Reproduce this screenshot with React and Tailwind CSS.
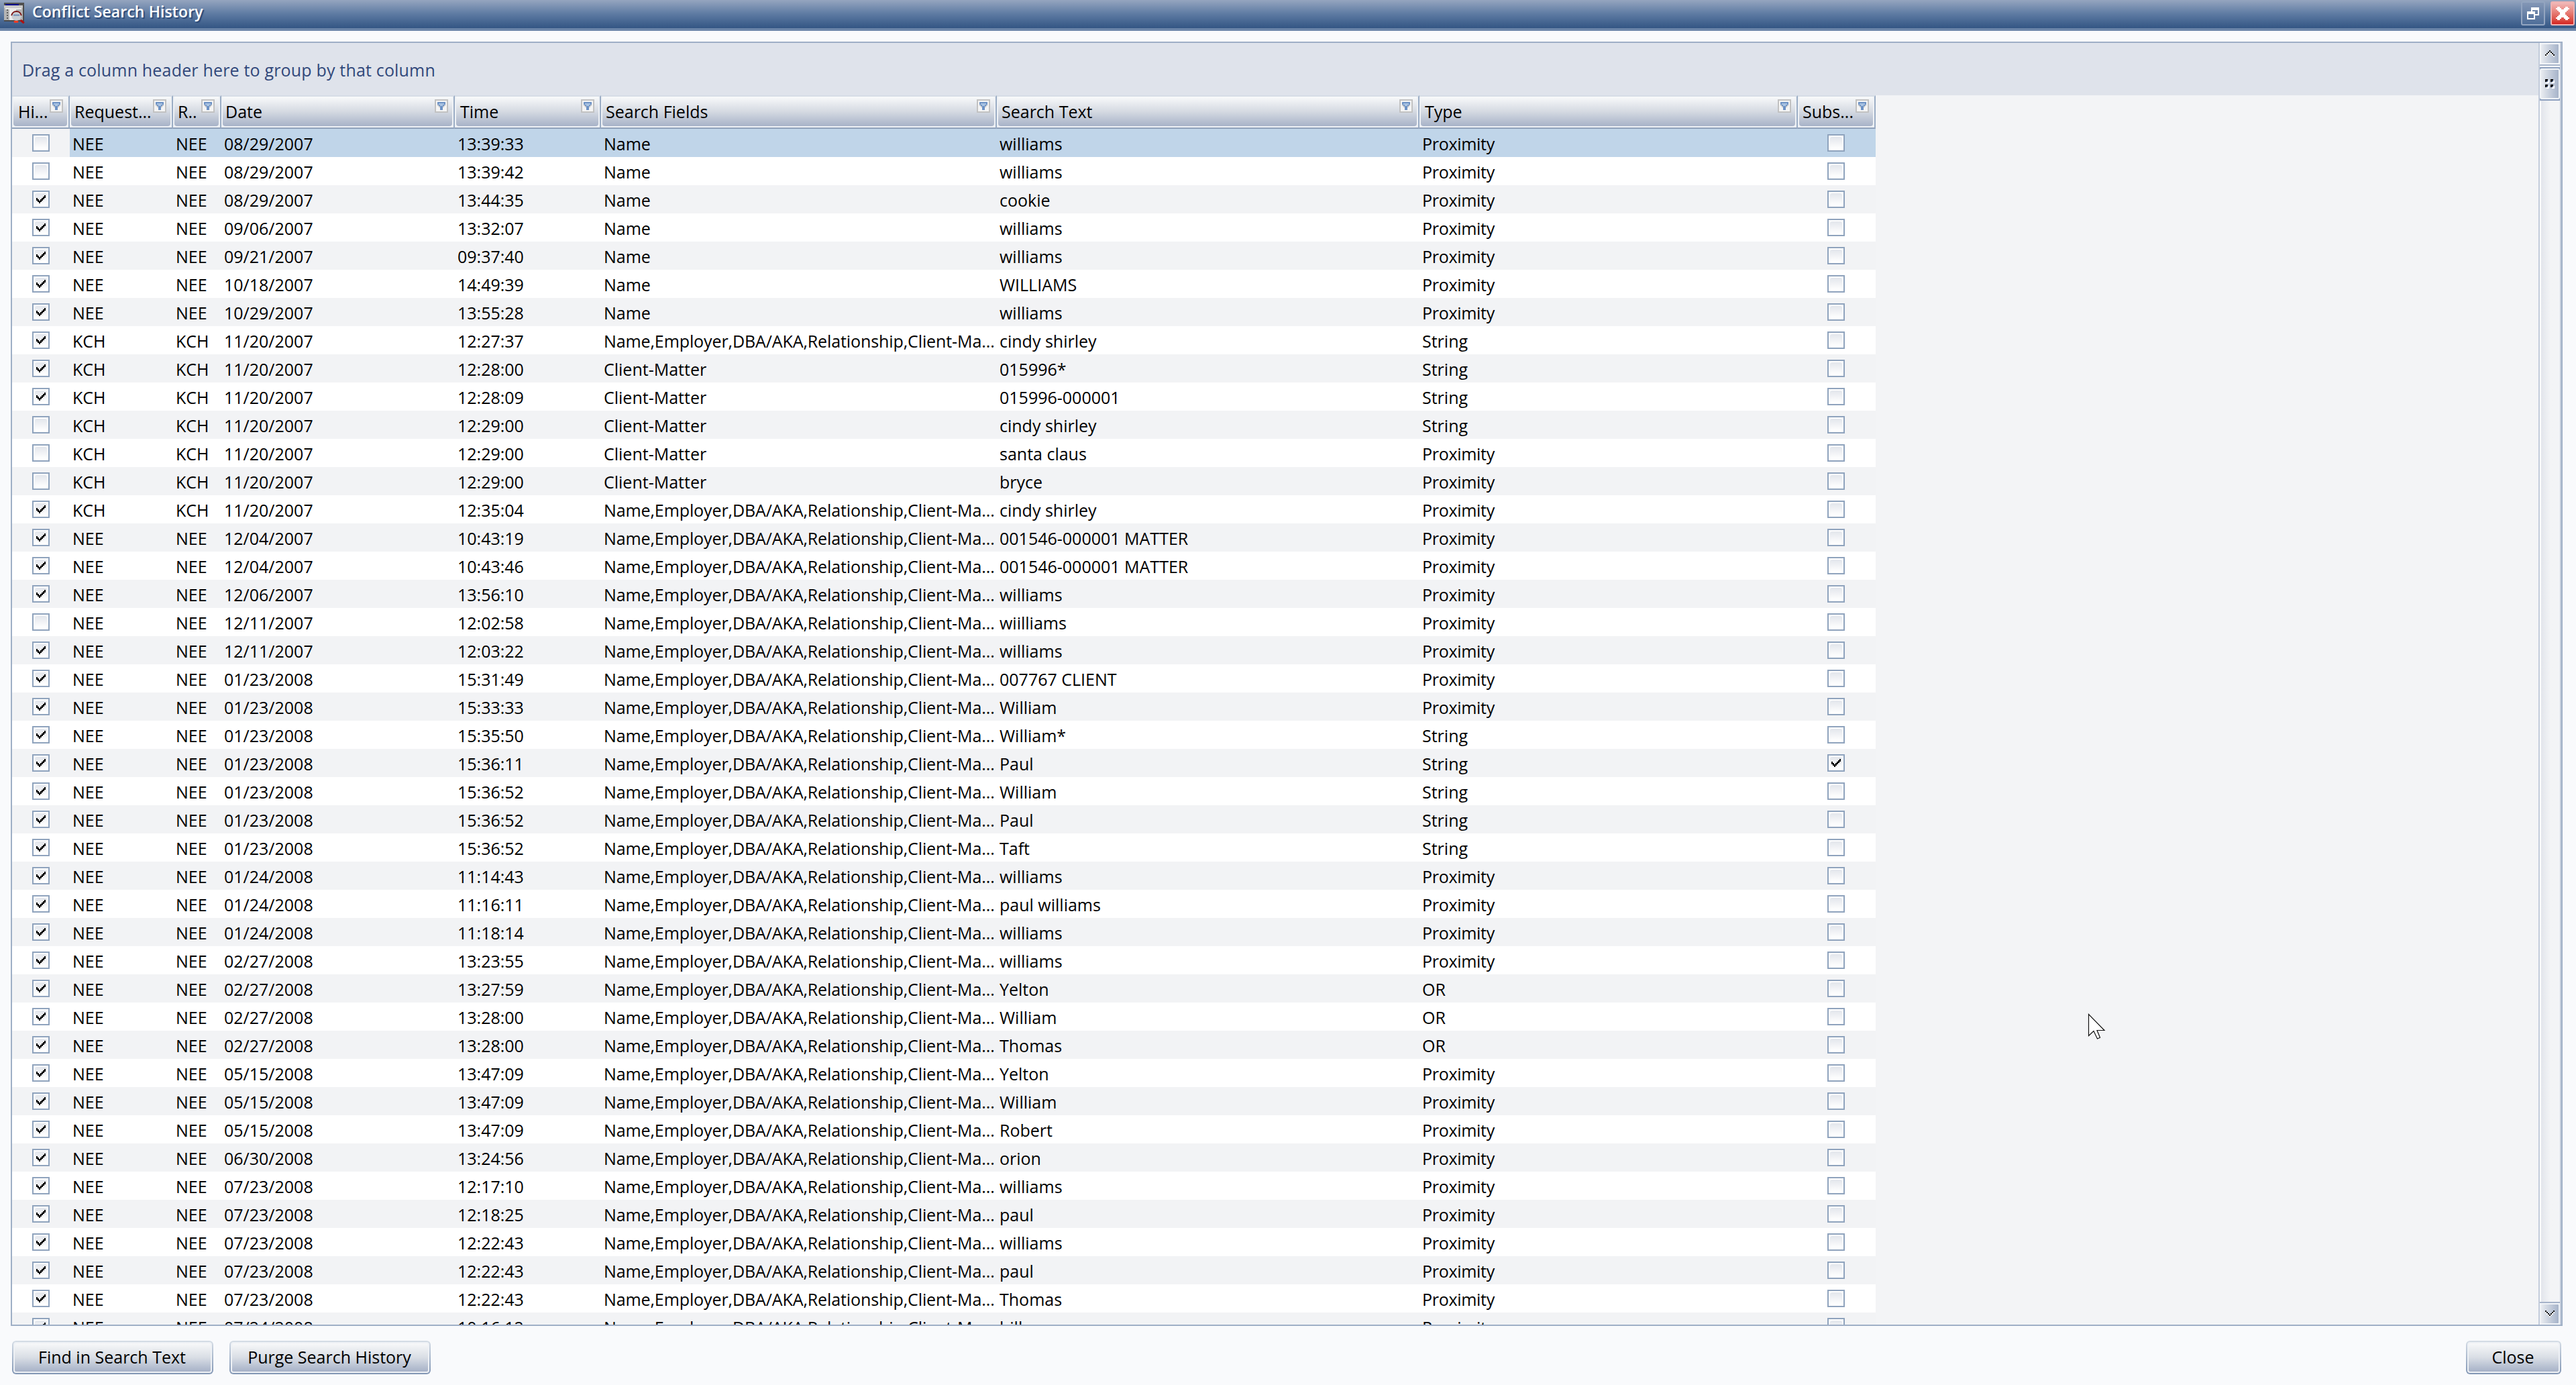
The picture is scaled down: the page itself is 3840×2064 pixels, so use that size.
import { useState } from "react";
import clsx from "clsx";

const ALL_FIELDS = "Name,Employer,DBA/AKA,Relationship,Client-Ma...";

const columns = [
  { key: "hidden", label: "Hi...", width: "w-[86px]", pad: "pl-[7px]" },
  { key: "requestor", label: "Request...", width: "w-[154px]", pad: "pl-[5px]" },
  { key: "runBy", label: "R..", width: "w-[72px]", pad: "pl-[5px]" },
  { key: "date", label: "Date", width: "w-[348px]", pad: "pl-[4px]" },
  { key: "time", label: "Time", width: "w-[218px]", pad: "pl-[6px]" },
  { key: "fields", label: "Search Fields", width: "w-[590px]", pad: "pl-[5px]" },
  { key: "text", label: "Search Text", width: "w-[630px]", pad: "pl-[5px]" },
  { key: "type", label: "Type", width: "w-[564px]", pad: "pl-[6px]" },
  { key: "subs", label: "Subs...", width: "w-[116px]", pad: "pl-[5px]" },
];

// [hidden, user, date, time, fields, text, type, subs]
const rows = [
  [0, "NEE", "08/29/2007", "13:39:33", "Name", "williams", "Proximity"],
  [0, "NEE", "08/29/2007", "13:39:42", "Name", "williams", "Proximity"],
  [1, "NEE", "08/29/2007", "13:44:35", "Name", "cookie", "Proximity"],
  [1, "NEE", "09/06/2007", "13:32:07", "Name", "williams", "Proximity"],
  [1, "NEE", "09/21/2007", "09:37:40", "Name", "williams", "Proximity"],
  [1, "NEE", "10/18/2007", "14:49:39", "Name", "WILLIAMS", "Proximity"],
  [1, "NEE", "10/29/2007", "13:55:28", "Name", "williams", "Proximity"],
  [1, "KCH", "11/20/2007", "12:27:37", ALL_FIELDS, "cindy shirley", "String"],
  [1, "KCH", "11/20/2007", "12:28:00", "Client-Matter", "015996*", "String"],
  [1, "KCH", "11/20/2007", "12:28:09", "Client-Matter", "015996-000001", "String"],
  [0, "KCH", "11/20/2007", "12:29:00", "Client-Matter", "cindy shirley", "String"],
  [0, "KCH", "11/20/2007", "12:29:00", "Client-Matter", "santa claus", "Proximity"],
  [0, "KCH", "11/20/2007", "12:29:00", "Client-Matter", "bryce", "Proximity"],
  [1, "KCH", "11/20/2007", "12:35:04", ALL_FIELDS, "cindy shirley", "Proximity"],
  [1, "NEE", "12/04/2007", "10:43:19", ALL_FIELDS, "001546-000001 MATTER", "Proximity"],
  [1, "NEE", "12/04/2007", "10:43:46", ALL_FIELDS, "001546-000001 MATTER", "Proximity"],
  [1, "NEE", "12/06/2007", "13:56:10", ALL_FIELDS, "williams", "Proximity"],
  [0, "NEE", "12/11/2007", "12:02:58", ALL_FIELDS, "wiilliams", "Proximity"],
  [1, "NEE", "12/11/2007", "12:03:22", ALL_FIELDS, "williams", "Proximity"],
  [1, "NEE", "01/23/2008", "15:31:49", ALL_FIELDS, "007767 CLIENT", "Proximity"],
  [1, "NEE", "01/23/2008", "15:33:33", ALL_FIELDS, "William", "Proximity"],
  [1, "NEE", "01/23/2008", "15:35:50", ALL_FIELDS, "William*", "String"],
  [1, "NEE", "01/23/2008", "15:36:11", ALL_FIELDS, "Paul", "String", 1],
  [1, "NEE", "01/23/2008", "15:36:52", ALL_FIELDS, "William", "String"],
  [1, "NEE", "01/23/2008", "15:36:52", ALL_FIELDS, "Paul", "String"],
  [1, "NEE", "01/23/2008", "15:36:52", ALL_FIELDS, "Taft", "String"],
  [1, "NEE", "01/24/2008", "11:14:43", ALL_FIELDS, "williams", "Proximity"],
  [1, "NEE", "01/24/2008", "11:16:11", ALL_FIELDS, "paul williams", "Proximity"],
  [1, "NEE", "01/24/2008", "11:18:14", ALL_FIELDS, "williams", "Proximity"],
  [1, "NEE", "02/27/2008", "13:23:55", ALL_FIELDS, "williams", "Proximity"],
  [1, "NEE", "02/27/2008", "13:27:59", ALL_FIELDS, "Yelton", "OR"],
  [1, "NEE", "02/27/2008", "13:28:00", ALL_FIELDS, "William", "OR"],
  [1, "NEE", "02/27/2008", "13:28:00", ALL_FIELDS, "Thomas", "OR"],
  [1, "NEE", "05/15/2008", "13:47:09", ALL_FIELDS, "Yelton", "Proximity"],
  [1, "NEE", "05/15/2008", "13:47:09", ALL_FIELDS, "William", "Proximity"],
  [1, "NEE", "05/15/2008", "13:47:09", ALL_FIELDS, "Robert", "Proximity"],
  [1, "NEE", "06/30/2008", "13:24:56", ALL_FIELDS, "orion", "Proximity"],
  [1, "NEE", "07/23/2008", "12:17:10", ALL_FIELDS, "williams", "Proximity"],
  [1, "NEE", "07/23/2008", "12:18:25", ALL_FIELDS, "paul", "Proximity"],
  [1, "NEE", "07/23/2008", "12:22:43", ALL_FIELDS, "williams", "Proximity"],
  [1, "NEE", "07/23/2008", "12:22:43", ALL_FIELDS, "paul", "Proximity"],
  [1, "NEE", "07/23/2008", "12:22:43", ALL_FIELDS, "Thomas", "Proximity"],
  [1, "NEE", "07/24/2008", "10:16:12", ALL_FIELDS, "bill", "Proximity"],
];

const AppIcon = () => (
  <svg width="32" height="32" viewBox="0 0 16 16" shapeRendering="crispEdges">
    <path d="M0 0h15v14H0z" fill="#4a4a4a" />
    <path d="M0 1h14v12H0z" fill="#b4b4b4" />
    <path d="M0 0h15v2H0z" fill="#505050" />
    <path d="M1 1h10v1H1z" fill="#00008b" />
    <path d="M0 2h14v2H0z" fill="#c9c9c9" />
    <path d="M1 4h12v1H1z" fill="#e8e8e8" />
    <path d="M2 5h1v1H2zM2 7h1v1H2zM2 9h1v1H2zM2 11h1v1H2z" fill="#5d5d5d" />
    <path d="M4 5h5v8H4z" fill="#ececec" />
    <g shapeRendering="auto">
      <circle cx="9.2" cy="9.8" r="3.6" fill="#c9ced3" />
      <path d="M5.6 9.6a3.7 3.7 0 0 1 7.3 0" fill="none" stroke="#7a1414" strokeWidth="1" />
      <path d="M7 9.3h4.6" stroke="#6f8fb8" strokeWidth="1" />
      <path d="M12.3 13l2.6 2.2" stroke="#b01010" strokeWidth="1.5" />
      <path d="M7.4 14.2h3.2" stroke="#ff3a20" strokeWidth="1.4" />
    </g>
  </svg>
);

const FilterIcon = () => (
  <span className="w-[20px] h-[20px] border-2 border-[#c2c2c2] bg-[#f4f4f4] flex justify-center pt-[2px] shrink-0">
    <svg width="12" height="12" viewBox="0 0 6 6" shapeRendering="crispEdges">
      <path d="M0 0h6v2H5v1H4v3H2V3H1V2H0z" fill="#6d92c5" />
      <path d="M1 1h4v1H4v1H2V2H1z" fill="#a9c3e2" />
      <path d="M0 2h1v1H0zM1 3h1v1H1zM5 2h1v1H5zM4 3h1v1H4z" fill="#c3c6ca" />
    </svg>
  </span>
);

const Checkbox = ({ checked, onChange }) => (
  <button
    onClick={onChange}
    className="w-[26px] h-[26px] border-2 border-[#8fa3bd] bg-white p-[2px] shrink-0 block"
  >
    <span className="flex w-full h-full rounded-[3px] bg-linear-to-b from-[#e3e6ec] to-[#ffffff] items-center justify-center">
      {checked ? (
        <svg width="14" height="16" viewBox="0 0 7 8" shapeRendering="crispEdges">
          <path d="M6 1h1v2H6v1H5v1H4v1H3v1H2V6H1V5H0V3h1v1h1v1h1V4h1V3h1V2h1z" fill="#000" />
        </svg>
      ) : null}
    </span>
  </button>
);

const ColumnHeader = ({ column }) => (
  <div
    className={clsx(
      column.width,
      "h-[50px] shrink-0 border-t-2 border-t-[#d6dde6] border-r-2 border-b-2 border-r-[#9badc5] border-b-[#8fa1ba] bg-[#eceff3]"
    )}
  >
    <div className="h-[46px] border-2 border-t-0 border-[#eef1f5] rounded-b-[6px] bg-linear-to-b from-[#f9fafb] via-[#d5dae2] to-[#a8b3c8] flex justify-between">
      <span className={clsx(column.pad, "leading-[44px] whitespace-nowrap")}>{column.label}</span>
      <span className="pt-[4px] pr-[6px]">
        <FilterIcon />
      </span>
    </div>
  </div>
);

const Row = ({ row, index, selected, onSelect, onToggle }) => {
  const [hidden, user, date, time, fields, text, type, subs] = row;
  const cells = [user, user, date, time, fields, text, type];
  const stripe = index % 2 ? "bg-white" : "bg-[#f2f3f5]";
  return (
    <div className={clsx("flex w-[2778px] h-[42px] shrink-0", stripe)} onClick={onSelect}>
      <div className="w-[86px] pt-[8px] pl-[30px] shrink-0">
        <Checkbox checked={hidden} onChange={() => onToggle(0)} />
      </div>
      <div className={clsx("flex flex-1", selected && "bg-[#c0d5e9]")}>
        {cells.map((cell, i) => (
          <div
            key={i}
            className={clsx(
              columns[i + 1].width,
              "pl-[4px] pt-px leading-[42px] h-[42px] shrink-0 whitespace-nowrap overflow-hidden",
              cell === ALL_FIELDS && "tracking-[-0.1px]",
              cell === "Proximity" && "tracking-[-0.3px]"
            )}
          >
            {cell}
          </div>
        ))}
        <div className="w-[116px] pt-[8px] pl-[44px] shrink-0">
          <Checkbox checked={subs} onChange={() => onToggle(7)} />
        </div>
      </div>
    </div>
  );
};

const ScrollUpIcon = () => (
  <svg width="14" height="10" viewBox="0 0 7 5" shapeRendering="crispEdges">
    <path d="M3 1h1v1h1v1h1v1h1v1H6V4H5V3H4V2H3v1H2v1H1v1H0V4h1V3h1V2h1z" fill="#fff" />
    <path d="M3 0h1v1h1v1h1v1h1v1H6V3H5V2H4V1H3v1H2v1H1v1H0V3h1V2h1V1h1z" fill="#111" />
  </svg>
);

const ScrollDownIcon = () => (
  <svg width="14" height="10" viewBox="0 0 7 5" shapeRendering="crispEdges">
    <path d="M0 1h1v1h1v1h1v1h1V3h1V2h1V1h1v1H6v1H5v1H4v1H3V4H2V3H1V2H0z" fill="#fff" />
    <path d="M0 0h1v1h1v1h1v1h1V2h1V1h1V0h1v1H6v1H5v1H4v1H3V3H2V2H1V1H0z" fill="#111" />
  </svg>
);

const Scrollbar = () => (
  <div className="w-[34px] h-full flex flex-col border-x-2 border-l-[#c3ccdb] border-r-[#c3ccdb] bg-white">
    <button className="h-[32px] shrink-0 border-2 border-[#f4f6f9] bg-linear-to-r from-[#e8ebf0] to-[#a6b3c9] flex items-center justify-center rounded-[3px]">
      <ScrollUpIcon />
    </button>
    <div className="h-[2px] shrink-0 bg-[#a6b3c9]" />
    <div className="h-[2px] shrink-0 bg-white" />
    <div className="h-[50px] shrink-0 border-y-2 border-y-[#8fa1bf] bg-[#8fa1bf]">
      <div className="h-[46px] border-2 border-[#f0f3f7] rounded-[3px] bg-linear-to-r from-[#e8ebf0] to-[#a6b3c9] flex items-center justify-center">
        <svg width="14" height="14" viewBox="0 0 7 7" shapeRendering="crispEdges">
          <path d="M1 1h2v2H1zM5 1h2v2H5zM1 5h2v2H1zM5 5h2v2H5z" fill="#fff" />
          <path d="M0 0h2v1H1v1H0zM4 0h2v1H5v1H4zM0 4h2v1H1v1H0zM4 4h2v1H5v1H4z" fill="#000" />
          <path d="M1 1h1v1H1zM5 1h1v1H5zM1 5h1v1H1zM5 5h1v1H5z" fill="#4f6284" />
        </svg>
      </div>
    </div>
    <div className="flex-1 bg-linear-to-r from-[#e2e5ec] via-[#f3f4f6] to-[#f3f4f6] border-l-2 border-white" />
    <div className="h-[2px] shrink-0 bg-[#a6b3c9]" />
    <button className="h-[32px] shrink-0 border-2 border-[#f0f3f7] bg-linear-to-r from-[#e8ebf0] to-[#a6b3c9] flex items-center justify-center rounded-[3px]">
      <ScrollDownIcon />
    </button>
  </div>
);

const FormButton = ({ children, className }) => (
  <button
    className={clsx(
      className,
      "h-[50px] rounded-[6px] p-[2px] bg-linear-to-b from-[#d5dde6] to-[#8296b4]"
    )}
  >
    <span className="block h-[46px] rounded-[4px] border-2 border-[#eef1f5] bg-linear-to-b from-[#f7f8f9] via-[#d9dee5] to-[#a6b1c7] leading-[41px] pr-[2px]">
      {children}
    </span>
  </button>
);

export default function App() {
  const [data, setData] = useState(rows);
  const [selected, setSelected] = useState(0);

  const toggle = (rowIndex, field) =>
    setData(data.map((row, i) => (i === rowIndex ? Object.assign([...row], { [field]: row[field] ? 0 : 1 }) : row)));

  return (
    <div className="w-[3840px] h-[2064px] bg-[#f9fafc] flex flex-col overflow-hidden font-['Open_Sans',sans-serif] text-[25px] text-black relative">
      {/* Title bar */}
      <header className="h-[46px] shrink-0 border-b-4 border-b-[#6c86a9] bg-linear-to-b from-[#95a5bf] via-[#5d7aa2] to-[#345684] flex">
        <div className="pl-[6px] pt-[4px]">
          <AppIcon />
        </div>
        <h1 className="ml-[10px] flex-1 text-[23px] leading-[35px] font-semibold text-white tracking-[0.1px] [text-shadow:2px_2px_1px_#2b4a78]">
          Conflict Search History
        </h1>
        <div className="flex pt-[2px] pr-[2px] gap-[8px]">
          <button className="w-[36px] h-[36px] rounded-[3px] border-2 border-[#93a5c0] bg-linear-to-b from-[#8497b6] to-[#4f6e99] flex items-center justify-center">
            <svg width="18" height="18" viewBox="0 0 9 9" shapeRendering="crispEdges">
              <path d="M3 0h6v6H6V5h2V2H4v1H3zM0 3h6v6H0zM1 5v3h4V5z" fill="#fff" fillRule="evenodd" />
            </svg>
          </button>
          <button className="w-[36px] h-[36px] rounded-[3px] border-2 border-[#eeb3b3] bg-linear-to-b from-[#f0b9b9] to-[#d32020] flex items-center justify-center">
            <svg width="20" height="20" viewBox="0 0 10 10" shapeRendering="crispEdges">
              <path d="M0 1h1V0h2v1h1v1h2V1h1V0h2v1h1v1H9v1H8v1H7v2h1v1h1v1h1v1H9v1H7V9H6V8H4v1H3v1H1V9H0V8h1V7h1V6h1V4H2V3H1V2H0z" fill="#fff" />
            </svg>
          </button>
        </div>
      </header>

      {/* Grid */}
      <main className="mt-[16px] ml-[16px] w-[3804px] h-[1914px] shrink-0 border-2 border-[#9fafc6] bg-[#f3f4f6] flex overflow-hidden">
        <div className="flex-1 flex flex-col overflow-hidden">
          <div className="h-[78px] shrink-0 bg-[#dfe3eb] pl-[15px] leading-[80px] text-[#31487a] tracking-[0.18px]">
            Drag a column header here to group by that column
          </div>
          <div className="flex shrink-0">
            {columns.map((column) => (
              <ColumnHeader key={column.key} column={column} />
            ))}
          </div>
          <div className="flex-1 flex flex-col overflow-hidden">
            {data.map((row, i) => (
              <Row
                key={i}
                row={row}
                index={i}
                selected={i === selected}
                onSelect={() => setSelected(i)}
                onToggle={(field) => toggle(i, field)}
              />
            ))}
          </div>
        </div>
        <Scrollbar />
      </main>

      {/* Actions */}
      <footer className="flex mt-[22px] pl-[18px] pr-[22px]">
        <FormButton className="w-[300px]">Find in Search Text</FormButton>
        <FormButton className="w-[300px] ml-[24px]">Purge Search History</FormButton>
        <FormButton className="w-[142px] ml-auto">Close</FormButton>
      </footer>

      {/* Mouse pointer */}
      <svg className="absolute left-[3112px] top-[1510px]" width="28" height="42" viewBox="0 0 28 42">
        <path d="M1.5 1.5v32l7.5-7 5.5 11.5 4-1.8-4.5-10.7h11z" fill="#fff" stroke="#111" strokeWidth="1.2" />
      </svg>
    </div>
  );
}
